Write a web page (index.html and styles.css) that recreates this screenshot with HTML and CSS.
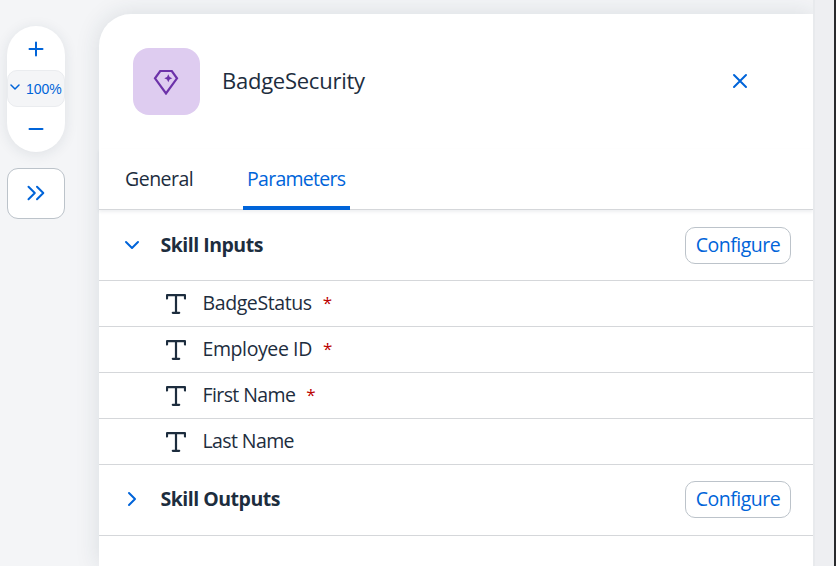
FILE: index.html
```html
<!DOCTYPE html>
<html lang="en">
<head>
<meta charset="utf-8">
<title>BadgeSecurity</title>
<link rel="stylesheet" href="styles.css">
</head>
<body>
<svg class="defs" width="0" height="0">
  <symbol id="text-type" viewBox="0 0 20 20"><path d="M1 4.500V1.200h18v3.300M10 1.200v17.600M6.800 18.800h6.400" fill="none" stroke="currentColor" stroke-width="2.200" stroke-linecap="round" stroke-linejoin="round"/></symbol>
</svg>
<div class="app">
  <aside class="tools">
    <div class="zoom">
      <button class="zoom-btn"><svg width="16" height="16" viewBox="0 0 16 16"><path d="M8 1.500v13M1.500 8h13"/></svg></button>
      <button class="zoom-level"><svg width="10" height="6" viewBox="0 0 10 6"><path d="M1 1l4 4 4-4"/></svg><span>100%</span></button>
      <button class="zoom-btn"><svg width="16" height="16" viewBox="0 0 16 16"><path d="M1.500 8h13"/></svg></button>
    </div>
    <button class="expand"><svg width="18" height="16" viewBox="0 0 18 16"><path d="M1.500 1.700L7.800 8l-6.300 6.300M10 1.700L16.300 8 10 14.300"/></svg></button>
  </aside>
  <main class="panel">
    <header class="head">
      <div class="avatar"><svg width="26" height="26" viewBox="0 0 26 26"><path class="gem" d="M7.200 2h11.600l5.200 7.300L13 24.500 2 9.300z"/><path class="spark" d="M15.300 5.200l1.300 2.700 2.700 1.300-2.700 1.300-1.300 2.700-1.300-2.700-2.700-1.300 2.700-1.300z"/></svg></div>
      <h1>BadgeSecurity</h1>
      <button class="close"><svg width="16" height="16" viewBox="0 0 16 16"><path d="M2 2l12 12M14 2L2 14"/></svg></button>
    </header>
    <nav class="tabs">
      <a class="tab general">General</a>
      <a class="tab active">Parameters</a>
    </nav>
    <section class="group">
      <svg class="chevron" width="16" height="16" viewBox="0 0 16 16"><path d="M2 5l6 6 6-6"/></svg>
      <h2>Skill Inputs</h2>
      <button class="configure">Configure</button>
    </section>
    <ul class="params">
      <li><svg class="type"><use href="#text-type"/></svg><span>BadgeStatus</span><b>*</b></li>
      <li><svg class="type"><use href="#text-type"/></svg><span>Employee ID</span><b>*</b></li>
      <li><svg class="type"><use href="#text-type"/></svg><span class="tight">First Name</span><b>*</b></li>
      <li><svg class="type"><use href="#text-type"/></svg><span class="tight">Last Name</span></li>
    </ul>
    <section class="group last">
      <svg class="chevron" width="16" height="16" viewBox="0 0 16 16"><path d="M5 2l6 6-6 6"/></svg>
      <h2>Skill Outputs</h2>
      <button class="configure">Configure</button>
    </section>
  </main>
  <div class="gutter"></div>
</div>
</body>
</html>
```

FILE: styles.css
```css
* { box-sizing: border-box; margin: 0; padding: 0; }
body {
  width: 836px; height: 566px; overflow: hidden;
  background: #f4f5f7; color: #1d2d3e;
  font: 19.500px/28px "Open Sans", sans-serif;
  letter-spacing: -.5px;
}
.defs { position: absolute; }
button { border: 0; background: none; font: inherit; letter-spacing: inherit; color: #0064d9; }
svg { display: block; flex: none; fill: none; stroke: #0064d9; stroke-width: 2; stroke-linecap: round; stroke-linejoin: round; }
.app { display: flex; height: 566px; }
.tools { width: 99px; padding: 26px 0 0 7px; }
.zoom {
  width: 58px; height: 126px; border-radius: 29px; background: #fff;
  display: grid; grid-template-rows: 44px 37px 43px;
  box-shadow: 0 2px 14px rgba(34, 53, 72, .1);
}
.zoom-btn { display: flex; align-items: center; justify-content: center; padding-top: 2px; }
.zoom-btn:last-child { padding-top: 1px; }
.zoom-level {
  border: 1px solid #eaecef; border-radius: 10px; background: #f4f5f7;
  display: flex; align-items: center; padding-left: 2px; gap: 6px;
  font: 14px/20px "Liberation Sans", sans-serif; letter-spacing: 0;
}
.zoom-level svg { margin-top: -3px; stroke-width: 1.500; }
.expand {
  width: 58px; height: 51px; margin-top: 16px; border: 1px solid #bcc3ca; border-radius: 11px;
  background: #fff; display: flex; align-items: center; justify-content: center; padding-bottom: 2px;
}
.panel {
  width: 714px; height: 552px; margin-top: 14px; background: #fff;
  border-top-left-radius: 32px; box-shadow: 0 0 24px rgba(34, 53, 72, .13);
}
.head { height: 135px; display: flex; align-items: center; padding-left: 34px; }
.avatar {
  width: 67px; height: 67px; border-radius: 16px; background: #deccf0;
  display: flex; align-items: center; justify-content: center; padding-right: 2px;
}
.gem { stroke: #6c32a9; stroke-width: 2.200; stroke-linejoin: miter; }
.spark { fill: #6c32a9; stroke: none; }
h1 { font-size: 22px; font-weight: 400; letter-spacing: -.25px; margin: -3px 0 0 22px; white-space: nowrap; }
.close { margin: -2px 65px 0 auto; }
.tabs {
  height: 61px; display: flex; padding-left: 26px; border-bottom: 1px solid #d5d7da;
  box-shadow: 0 2px 3px rgba(34, 53, 72, .08);
}
.tab { height: 61px; padding-top: 16px; white-space: nowrap; }
.general { width: 118px; }
.active {
  width: 107px; padding-left: 4px; letter-spacing: -.72px; color: #0064d9; border-radius: 0;
  background: linear-gradient(#0064d9, #0064d9) bottom / 100% 4px no-repeat;
}
.group { height: 71px; display: flex; align-items: center; padding: 0 22px 0 25px; border-bottom: 1px solid #d5d7da; }
.group.last { padding-bottom: 2px; }
h2 { font-size: 19.500px; font-weight: 700; margin-left: 20.500px; white-space: nowrap; }
.configure {
  width: 106px; height: 37px; margin-left: auto; border: 1px solid #bcc3ca; border-radius: 10px;
  text-align: center; white-space: nowrap; line-height: 34px;
}
.params { list-style: none; }
.params li { height: 46px; display: flex; align-items: center; padding-left: 67px; border-bottom: 1px solid #d5d7da; white-space: nowrap; }
.params span { margin-top: -2px; letter-spacing: -.4px; }
.params .tight { letter-spacing: -.6px; }
.type { width: 20px; height: 20px; margin: 1px 16.500px 0 0; stroke: none; color: #1d2d3e; }
.params b { color: #b00; font-size: 17px; font-weight: 400; margin: -2px 0 0 11px; }
.gutter { width: 23px; background: #eeeff2; border-left: 2px solid #e8eaed; border-right: 2px solid #292a2d; }
```
